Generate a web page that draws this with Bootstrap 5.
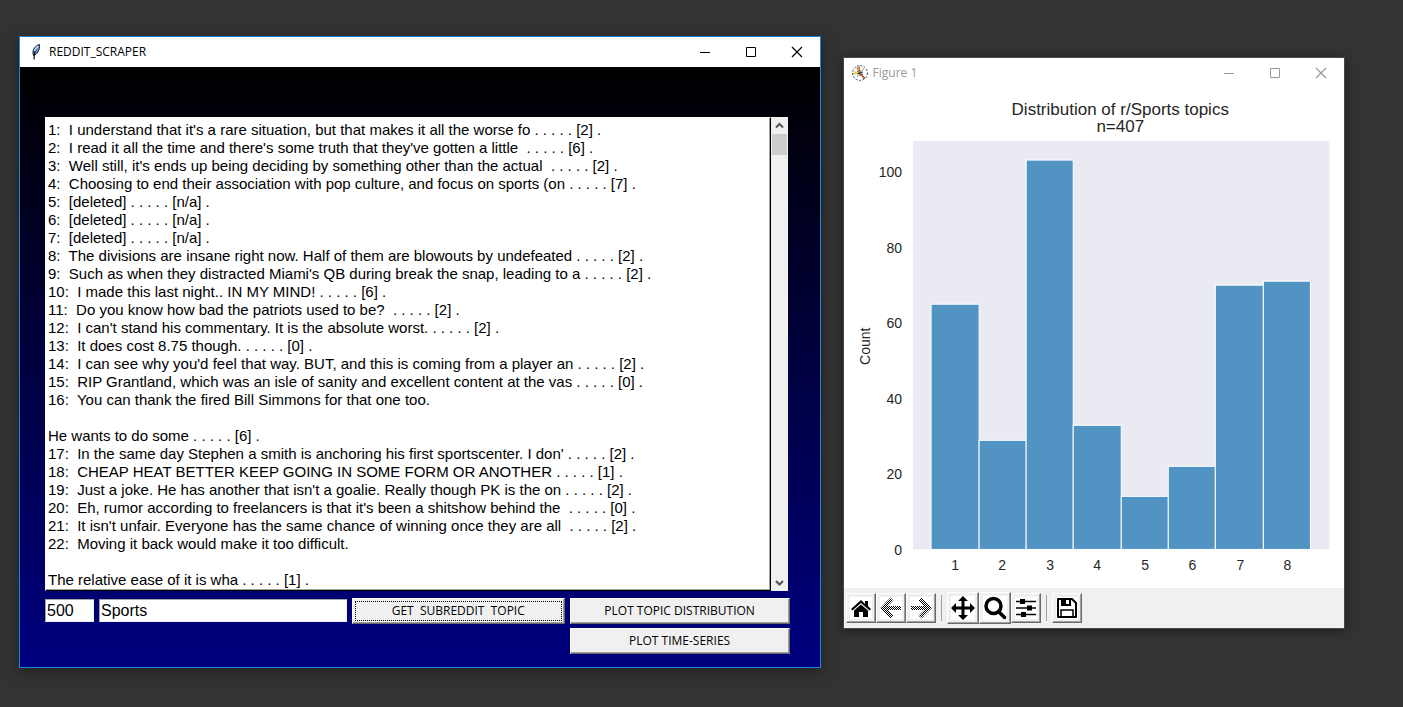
<!DOCTYPE html>
<html lang="en">
<head>
<meta charset="utf-8">
<meta name="viewport" content="width=device-width, initial-scale=1">
<title>REDDIT_SCRAPER</title>
<link href="https://cdn.jsdelivr.net/npm/bootstrap@5.3.0/dist/css/bootstrap.min.css" rel="stylesheet">
<style>
  body { background: #333; font-family: "Open Sans", "Noto Sans", sans-serif; font-size: 12px; line-height: 16px; color: #000; }
  .desktop { padding: 36px 58px 38px 19px; gap: 22px; }
  .win-scraper { flex: 802 1 0; min-width: 0; border: 1px solid #1883d7; box-shadow: 0 4px 16px rgba(0,0,0,.4); }
  .win-figure { flex: 502 1 0; min-width: 0; margin-top: 21px; border: 1px solid #484848; background: #fff; box-shadow: 0 2px 10px rgba(0,0,0,.45); }
  .titlebar { height: 30px; background: #fff; padding-left: 8px; gap: 5px; }
  .titlebar h1 { font-size: 12px; line-height: 16px; font-weight: 400; margin: 0; }
  .win-figure .titlebar { color: #999; }
  .capbtn { width: 46px; height: 30px; padding: 0; border: 0; background: transparent; color: inherit; display: flex; align-items: center; justify-content: center; }
  .app-body { background: linear-gradient(#000, #000080); padding: 50px 30px 13px 25px; }
  .log-row { margin-right: 2px; }
  .log { flex: 1 1 0; min-width: 0; display: block; resize: none; overflow: hidden; white-space: pre; border: 1px solid #fff; border-right: 1px solid #000; border-bottom: 1px solid #000; box-shadow: inset -1px -1px #a0a0a0; background: #fff; color: #000; padding: 3px 2px 1px; font: 15px/18px "Liberation Sans", Arial, sans-serif; outline: 0; border-radius: 0; }
  .scroller { width: 17px; background: #f0f0f0; }
  .scroller button { width: 17px; height: 17px; padding: 0; border: 0; background: transparent; display: block; }
  .scroller .thumb { height: 21px; margin: 0 1px; background: #cdcdcd; }
  .controls { display: grid; grid-template-columns: 49fr 248fr 213fr 220fr; gap: 4px 5px; margin-top: 7px; }
  .entry { width: 100%; min-width: 0; height: 23px; margin-top: 1px; padding: 0 1px; border: 1px solid #f0f0f0; border-top-color: #a0a0a0; border-left-color: #a0a0a0; background: #fff; color: #000; font: 16px/20px "Liberation Sans", Arial, sans-serif; border-radius: 0; outline: 0; }
  .tkbtn { height: 26px; padding: 0; background: #f0f0f0; color: #000; border: 1px solid #fff; border-right-color: #696969; border-bottom-color: #696969; box-shadow: inset -1px -1px #a0a0a0; white-space: pre; }
  .tkbtn span { display: block; margin: 2px; height: 20px; line-height: 18px; border: 1px solid transparent; }
  .tkbtn.active-focus span { border: 1px dotted #000; }
  .last-col { grid-column: 4; }
  .chart { display: block; width: 100%; height: auto; font-family: "Liberation Sans", Arial, sans-serif; font-size: 14px; fill: #262626; }
  .chart .heading { font-size: 17px; }
  .bars rect { fill: #5194c4; stroke: #fff; stroke-width: 1px; }
  .tools { height: 40px; background: #f0f0f0; padding-left: 2px; }
  .tool { width: 30px; height: 30px; padding: 0; background: #fff; border: 1px solid #fff; border-right-color: #696969; border-bottom-color: #696969; box-shadow: inset -1px -1px #a0a0a0, inset 0 0 0 3px #f0f0f0; display: flex; align-items: center; justify-content: center; color: #000; }
  .tool.big { width: 32px; height: 32px; }
  .rule { width: 1px; height: 26px; background: #a0a0a0; margin: 0 5px; }
</style>
</head>
<body>
<main class="desktop d-flex align-items-start">
  <section class="win-scraper">
    <header class="titlebar d-flex align-items-center">
      <svg width="16" height="16" viewBox="0 0 16 16" aria-hidden="true"><path d="M11.500 .5c-4 1-7 5-6.500 9l.5 2c4-1 6.500-6 6-11z" fill="#5b96dc" stroke="#15202c" stroke-width="1"/><path d="M9 4 6.500 9 6 15.500" fill="none" stroke="#111" stroke-width="1.200"/><path d="M10 2 6.500 7" stroke="#c9e1f8" stroke-width="1.500"/></svg>
      <h1 class="flex-grow-1">REDDIT_SCRAPER</h1>
      <div class="d-flex">
      <button class="capbtn" aria-label="Minimize"><svg width="12" height="12" viewBox="0 0 12 12"><path d="M1 6.500h10" stroke="currentColor"/></svg></button>
      <button class="capbtn" aria-label="Maximize"><svg width="12" height="12" viewBox="0 0 12 12"><path d="M1.500 1.500h9v9h-9z" fill="none" stroke="currentColor"/></svg></button>
      <button class="capbtn" aria-label="Close"><svg width="12" height="12" viewBox="0 0 12 12"><path d="m1 1 10 10M11 1 1 11" stroke="currentColor" stroke-width="1.200"/></svg></button>
      </div>
    </header>
    <div class="app-body">
      <div class="log-row d-flex">
        <textarea class="log" rows="26" readonly spellcheck="false" aria-label="Comments">1:  I understand that it's a rare situation, but that makes it all the worse fo . . . . . [2] .
2:  I read it all the time and there's some truth that they've gotten a little  . . . . . [6] .
3:  Well still, it's ends up being deciding by something other than the actual  . . . . . [2] .
4:  Choosing to end their association with pop culture, and focus on sports (on . . . . . [7] .
5:  [deleted] . . . . . [n/a] .
6:  [deleted] . . . . . [n/a] .
7:  [deleted] . . . . . [n/a] .
8:  The divisions are insane right now. Half of them are blowouts by undefeated . . . . . [2] .
9:  Such as when they distracted Miami's QB during break the snap, leading to a . . . . . [2] .
10:  I made this last night.. IN MY MIND! . . . . . [6] .
11:  Do you know how bad the patriots used to be?  . . . . . [2] .
12:  I can't stand his commentary. It is the absolute worst. . . . . . [2] .
13:  It does cost 8.75 though. . . . . . [0] .
14:  I can see why you'd feel that way. BUT, and this is coming from a player an . . . . . [2] .
15:  RIP Grantland, which was an isle of sanity and excellent content at the vas . . . . . [0] .
16:  You can thank the fired Bill Simmons for that one too.

He wants to do some . . . . . [6] .
17:  In the same day Stephen a smith is anchoring his first sportscenter. I don' . . . . . [2] .
18:  CHEAP HEAT BETTER KEEP GOING IN SOME FORM OR ANOTHER . . . . . [1] .
19:  Just a joke. He has another that isn't a goalie. Really though PK is the on . . . . . [2] .
20:  Eh, rumor according to freelancers is that it's been a shitshow behind the  . . . . . [0] .
21:  It isn't unfair. Everyone has the same chance of winning once they are all  . . . . . [2] .
22:  Moving it back would make it too difficult.

The relative ease of it is wha . . . . . [1] .</textarea>
        <div class="scroller d-flex flex-column">
          <button aria-label="Scroll up"><svg class="d-block" width="17" height="17" viewBox="0 0 17 17"><path d="m5 10.500 3.500-3.500 3.500 3.500" fill="none" stroke="#555" stroke-width="2"/></svg></button>
          <div class="thumb"></div>
          <button class="mt-auto" aria-label="Scroll down"><svg class="d-block" width="17" height="17" viewBox="0 0 17 17"><path d="m5 7 3.500 3.500L12 7" fill="none" stroke="#555" stroke-width="2"/></svg></button>
        </div>
      </div>
      <form class="controls" onsubmit="return false">
        <input class="entry" type="text" value="500" aria-label="Number of comments">
        <input class="entry" type="text" value="Sports" aria-label="Subreddit">
        <button class="tkbtn active-focus" type="button"><span>GET  SUBREDDIT  TOPIC</span></button>
        <button class="tkbtn" type="button"><span>PLOT TOPIC DISTRIBUTION</span></button>
        <button class="tkbtn last-col" type="button"><span>PLOT TIME-SERIES</span></button>
      </form>
    </div>
  </section>

  <section class="win-figure">
    <header class="titlebar d-flex align-items-center">
      <svg width="16" height="16" viewBox="0 0 16 16" aria-hidden="true"><circle cx="8" cy="8" r="7.400" fill="#fff" stroke="#11557c" stroke-dasharray="2 1.500"/><path d="M8 8 4 3l4-2z" fill="#ee7d45"/><path d="M8 8 1.500 6v4z" fill="#f0cb4c"/><path d="m8 8 4 6 1-1z" fill="#d4502c" stroke="#d4502c"/><path d="m8 8 4-5M8 8l-3 4" stroke="#8da57b"/><path d="m5 6 6 4M8 5v6M5 9l6-2" stroke="#444"/></svg>
      <h1 class="flex-grow-1">Figure 1</h1>
      <div class="d-flex">
      <button class="capbtn" aria-label="Minimize"><svg width="12" height="12" viewBox="0 0 12 12"><path d="M1 6.500h10" stroke="currentColor"/></svg></button>
      <button class="capbtn" aria-label="Maximize"><svg width="12" height="12" viewBox="0 0 12 12"><path d="M1.500 1.500h9v9h-9z" fill="none" stroke="currentColor"/></svg></button>
      <button class="capbtn" aria-label="Close"><svg width="12" height="12" viewBox="0 0 12 12"><path d="m1 1 10 10M11 1 1 11" stroke="currentColor" stroke-width="1.200"/></svg></button>
      </div>
    </header>
    <svg class="chart" viewBox="0 0 500 500" role="img" aria-label="Distribution of r/Sports topics">
      <g class="heading" text-anchor="middle"><text x="276" y="27">Distribution of r/Sports topics</text><text x="276" y="44">n=407</text></g>
      <rect x="69" y="53" width="416" height="408" fill="#eaeaf2"/>
      <g class="bars">
        <rect x="87" y="216" width="48" height="245"/><rect x="135" y="352" width="47" height="109"/><rect x="182" y="72" width="47" height="389"/><rect x="229" y="337" width="48" height="124"/><rect x="277" y="408" width="47" height="53"/><rect x="324" y="378" width="47" height="83"/><rect x="371" y="197" width="48" height="264"/><rect x="419" y="193" width="47" height="268"/>
      </g>
      <g text-anchor="end"><text x="58" y="467">0</text><text x="58" y="391">20</text><text x="58" y="316">40</text><text x="58" y="240">60</text><text x="58" y="165">80</text><text x="58" y="89">100</text></g>
      <g text-anchor="middle"><text x="111" y="482">1</text><text x="158" y="482">2</text><text x="206" y="482">3</text><text x="253" y="482">4</text><text x="301" y="482">5</text><text x="348" y="482">6</text><text x="396" y="482">7</text><text x="443" y="482">8</text><text transform="translate(26 258) rotate(-90)">Count</text></g>
    </svg>
    <div class="tools d-flex align-items-center" role="toolbar" aria-label="Figure tools">
      <button class="tool" aria-label="Home"><svg width="22" height="22" viewBox="0 0 22 22"><path d="M11 3 1 12l1.500 1.500L11 6l8.500 7.500L21 12l-3-3V4h-3v3z"/><path d="m11 7.500-7 6V20h5v-5h4v5h5v-6.500z"/></svg></button>
      <button class="tool" aria-label="Back"><svg width="22" height="22" viewBox="0 0 22 22"><defs><pattern id="dither" width="2" height="2" patternUnits="userSpaceOnUse"><path d="M0 0h1v1H0zM1 1h1v1H1z" fill="#000"/></pattern></defs><path d="m12 2-9 9 9 9M3 11h18" fill="none" stroke="url(#dither)" stroke-width="4"/></svg></button>
      <button class="tool" aria-label="Forward"><svg width="22" height="22" viewBox="0 0 22 22"><path d="m10 2 9 9-9 9M19 11H1" fill="none" stroke="url(#dither)" stroke-width="4"/></svg></button>
      <span class="rule"></span>
      <button class="tool big" aria-label="Pan"><svg width="24" height="24" viewBox="0 0 24 24"><path d="m12 0 5 5h-3.500v5.500H19V7l5 5-5 5v-3.500h-5.500V19H17l-5 5-5-5h3.500v-5.500H5V17l-5-5 5-5v3.500h5.500V5H7z"/></svg></button>
      <button class="tool big" aria-label="Zoom"><svg width="24" height="24" viewBox="0 0 24 24"><circle cx="10.500" cy="10" r="7.500" fill="none" stroke="#000" stroke-width="3.500"/><path d="m15.500 15.500 6 6" stroke="#000" stroke-width="3.500" stroke-linecap="round"/></svg></button>
      <button class="tool" aria-label="Configure subplots"><svg width="22" height="22" viewBox="0 0 22 22"><path d="M1 4.500h20M1 11h20M1 17.500h20" stroke="#000" stroke-width="1.700"/><path d="M5 2h5v5H5zM12 8.500h5v5h-5zM6 15h5v5H6z"/></svg></button>
      <span class="rule"></span>
      <button class="tool" aria-label="Save"><svg width="22" height="22" viewBox="0 0 22 22"><path d="M2 2h14l4 4v14H2z" fill="#fff" stroke="#000" stroke-width="2" stroke-linejoin="round"/><path d="M5 2h10v7H5z"/><path d="M10 3h3v4h-3z" fill="#fff"/><path d="M5 19.500v-6.500h12v6.500" fill="none" stroke="#000" stroke-width="1.500"/></svg></button>
    </div>
  </section>
</main>
<script src="https://cdn.jsdelivr.net/npm/bootstrap@5.3.0/dist/js/bootstrap.bundle.min.js"></script>
</body>
</html>
